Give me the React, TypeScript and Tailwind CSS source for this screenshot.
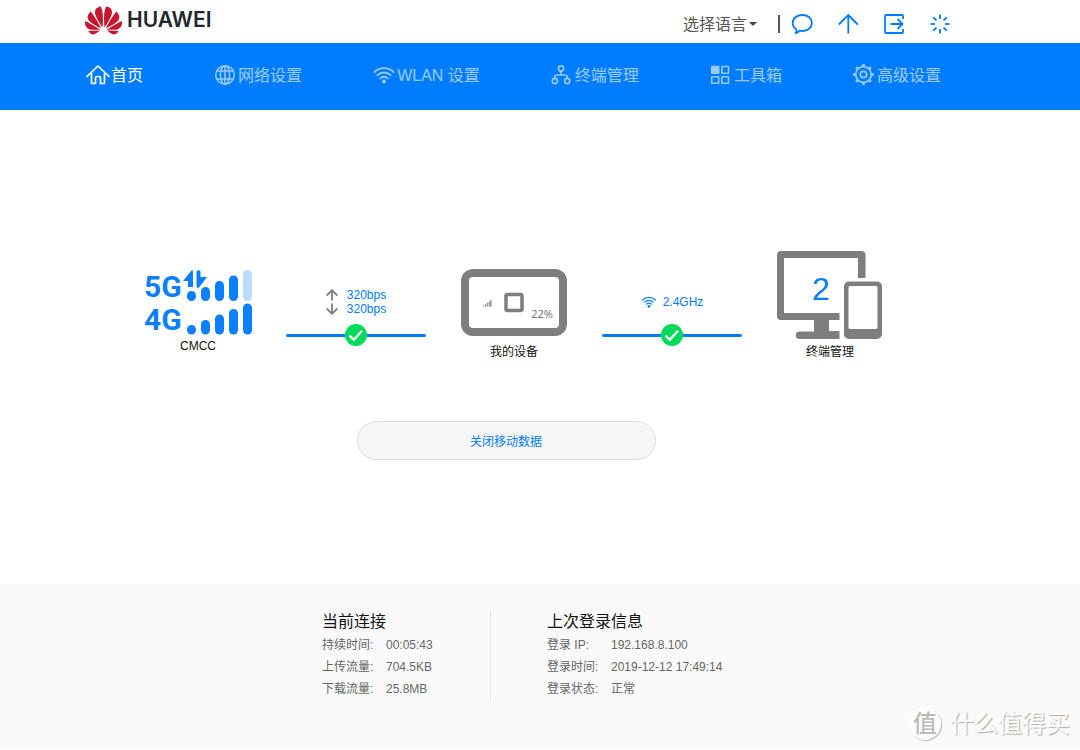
import type { ReactNode } from 'react'
import { SiHuawei } from 'react-icons/si'

function Icon({ children, width = 2, size = 24 }: { children: ReactNode; width?: number; size?: number }) {
  return (
    <svg
      width={size}
      height={size}
      viewBox="0 0 24 24"
      fill="none"
      stroke="currentColor"
      strokeWidth={width}
      aria-hidden="true"
      className="shrink-0"
    >
      {children}
    </svg>
  )
}

function HomeIcon() {
  return (
    <Icon width={1.7}>
      <path d="M1 13.500 12 3l11 10.500" strokeLinecap="round" strokeLinejoin="round" />
      <path d="M5.500 10v9.500a1 1 0 0 0 1 1h3v-5.500a1.500 1.500 0 0 1 1.500-1.500h2a1.500 1.500 0 0 1 1.500 1.500v5.500h3a1 1 0 0 0 1-1V10" />
    </Icon>
  )
}

function GlobeIcon() {
  return (
    <Icon width={1.5}>
      <circle cx="12" cy="12" r="9.300" />
      <ellipse cx="12" cy="12" rx="4.600" ry="9.300" />
      <path d="M12 3v18M4 8h16M4 16h16" />
    </Icon>
  )
}

function WifiIcon({ size = 24 }: { size?: number }) {
  return (
    <Icon width={1.8} size={size}>
      <path d="M2.500 9a13.500 13.500 0 0 1 19 0M5.500 12.200a9.200 9.200 0 0 1 13 0M8.400 15.300a5 5 0 0 1 7.200 0" strokeLinecap="round" />
      <circle cx="12" cy="18.500" r="2" fill="currentColor" stroke="none" />
    </Icon>
  )
}

function NodesIcon() {
  return (
    <Icon width={1.6}>
      <circle cx="11" cy="5.500" r="2.600" />
      <circle cx="4.800" cy="18" r="2.600" />
      <circle cx="17.200" cy="18" r="2.600" />
      <path d="M11 8v4M4.800 15.400V14a2 2 0 0 1 2-2h8.400a2 2 0 0 1 2 2v1.400" />
    </Icon>
  )
}

function ToolboxIcon() {
  return (
    <Icon width={1.6}>
      <rect x="2.700" y="3.500" width="7" height="6.800" rx="0.500" fill="currentColor" />
      <rect x="12.900" y="3.500" width="6.600" height="6.800" rx="0.500" />
      <rect x="2.700" y="13.700" width="7" height="6.500" rx="0.500" />
      <rect x="12.900" y="13.700" width="6.600" height="6.500" rx="0.500" />
    </Icon>
  )
}

const eighths = [0, 45, 90, 135, 180, 225, 270, 315]

function GearIcon() {
  return (
    <Icon width={1.7}>
      <circle cx="11.500" cy="11.500" r="7.800" />
      <circle cx="11.500" cy="11.500" r="3.200" />
      {eighths.map((angle) => (
        <path key={angle} d="M11.500 1.200v2.300" strokeWidth="3" transform={`rotate(${angle} 11.500 11.500)`} />
      ))}
    </Icon>
  )
}

const navItems = [
  { label: '首页', icon: <HomeIcon />, active: true },
  { label: '网络设置', icon: <GlobeIcon /> },
  { label: 'WLAN 设置', icon: <WifiIcon /> },
  { label: '终端管理', icon: <NodesIcon /> },
  { label: '工具箱', icon: <ToolboxIcon /> },
  { label: '高级设置', icon: <GearIcon /> },
]

const actions = [
  {
    label: '消息',
    icon: (
      <path
        d="M5.500 21c1-1 1.400-2.200 1-3.600C3.800 15.800 2.700 13.500 2.700 11c0-4.600 4.200-8 9.700-8s9.500 3.400 9.500 8-4.200 8-9.500 8c-1 0-1.800-.1-2.600-.3-1 1.200-2.300 2.200-4.300 2.300z"
        strokeLinejoin="round"
      />
    ),
  },
  { label: '更新', icon: <path d="M12.300 21.500V3M2.800 12.500 12.300 3l9.500 9.500" /> },
  {
    label: '退出',
    icon: (
      <path d="M21 7V4a1 1 0 0 0-1-1H4a1 1 0 0 0-1 1v16a1 1 0 0 0 1 1h16a1 1 0 0 0 1-1v-3M8.500 12h12M15.500 7l5 5-5 5" />
    ),
  },
  {
    label: '状态',
    icon: eighths.map((angle) => <path key={angle} d="M12 2.500v4.500" transform={`rotate(${angle} 12 12)`} />),
  },
]

function Header() {
  return (
    <header className="flex h-[43px] items-center justify-between bg-white pl-[85px] pr-[128px]">
      <a href="#" className="flex items-center gap-[5px] pb-[3px] text-[#222829]">
        <SiHuawei size={37} color="#c7172f" aria-hidden="true" />
        <span className="font-['Inter',sans-serif] text-[21px] leading-6 font-semibold">HUAWEI</span>
      </a>
      <div className="flex items-center pt-1">
        <div className="relative">
          <select
            aria-label="选择语言"
            className="w-[74px] appearance-none bg-transparent pt-[2px] text-base leading-6 text-[#555]"
          >
            <option>选择语言</option>
          </select>
          <span className="pointer-events-none absolute top-[11px] right-0 border-x-4 border-t-4 border-x-transparent border-t-[#444]" />
        </div>
        <span className="ml-[21px] h-[18px] w-[2px] bg-[#555]" />
        <div className="ml-[10px] flex gap-[22px] text-[#007dff]">
          {actions.map((action) => (
            <button key={action.label} type="button" aria-label={action.label}>
              <Icon width={1.8}>{action.icon}</Icon>
            </button>
          ))}
        </div>
      </div>
    </header>
  )
}

function Nav() {
  return (
    <nav className="flex h-[67px] justify-between bg-[#007dff] pt-5 pr-[139px] pl-[86px] text-base leading-6 text-white">
      {navItems.map((item) => (
        <a
          key={item.label}
          href="#"
          className={item.active ? 'flex h-6 items-center gap-px' : 'flex h-6 items-center gap-px opacity-60'}
        >
          {item.icon}
          <span className="pt-[2px]">{item.label}</span>
        </a>
      ))}
    </nav>
  )
}

const bars5g = [
  { x: 4, y: 21, h: 10 },
  { x: 18, y: 17, h: 14 },
  { x: 32, y: 11, h: 20 },
  { x: 46, y: 5.5, h: 25.5 },
  { x: 60, y: 0, h: 31 },
]

const bars4g = [
  { x: 4, y: 55, h: 9.5 },
  { x: 18, y: 50, h: 14.5 },
  { x: 32, y: 44.5, h: 20 },
  { x: 46, y: 39, h: 25.5 },
  { x: 60, y: 33.5, h: 31 },
]

function Signal() {
  return (
    <div className="flex flex-col items-center pb-[7px]">
      <div className="flex h-[65px] w-[108px] justify-between text-[#0a80ff]">
        <div className="font-['Roboto',sans-serif] text-[30px] leading-[33px] font-bold">
          <p>5G</p>
          <p>4G</p>
        </div>
        <svg width="69" height="65" viewBox="0 0 69 65" fill="currentColor" className="shrink-0" aria-hidden="true">
          {bars5g.map((bar, i) => (
            <rect key={bar.x} x={bar.x} y={bar.y} width="9" height={bar.h} rx="4.5" opacity={i === 4 ? 0.28 : 1} />
          ))}
          {bars4g.map((bar) => (
            <rect key={bar.x} x={bar.x} y={bar.y} width="9" height={bar.h} rx="4.5" />
          ))}
          <path d="M0 11 8 1q2-2 2 1v15H5v-6zM13.500 1.500q2-3 4 0V7H24L16 17.500q-2.500 1-2.500-1z" stroke="#fff" strokeWidth="1" paintOrder="stroke" />
        </svg>
      </div>
      <p className="mt-[2px] leading-[18px]">CMCC</p>
    </div>
  )
}

function Link({ children }: { children: ReactNode }) {
  return (
    <div className="flex flex-col items-center pb-4">
      <div className="mb-2 flex h-7 items-center text-[#007dff]">{children}</div>
      <div className="flex w-[140px] max-w-full items-center">
        <span className="h-[3px] flex-1 rounded-l-full bg-[#007dff]" />
        <svg width="22" height="22" viewBox="0 0 22 22" aria-hidden="true">
          <circle cx="11" cy="11" r="11" fill="#00d95a" />
          <path d="m4.500 11.500 4.300 4.300 8.200-9" fill="none" stroke="#fff" strokeWidth="2.400" />
        </svg>
        <span className="h-[3px] flex-1 rounded-r-full bg-[#007dff]" />
      </div>
    </div>
  )
}

function Device() {
  return (
    <div className="flex flex-col items-center">
      <div className="relative">
        <svg width="106" height="67" viewBox="0 0 106 67" fill="none" stroke="#7e7e7e" aria-hidden="true">
          <rect x="4" y="4" width="98" height="59" rx="8" strokeWidth="8" />
          <rect x="45" y="25.500" width="16" height="16" rx="1.500" strokeWidth="3.500" />
          <path d="M22.500 37.500v-1M24.500 37.500V35M26.500 37.500v-4M28.500 37.500v-5M30 37.500V31" stroke="#999" strokeWidth="1.400" />
        </svg>
        <span className="absolute right-[14px] bottom-[15px] font-['Noto_Sans',sans-serif] text-[11px] leading-[14px] text-[#777]">
          22%
        </span>
      </div>
      <p className="mt-[6px] leading-5">我的设备</p>
    </div>
  )
}

function Terminals() {
  return (
    <div className="flex flex-col items-center">
      <div className="relative">
        <svg width="106" height="88" viewBox="0 0 106 88" fill="#7e7e7e" aria-hidden="true">
          <path d="M4 0h80.500a4 4 0 0 1 4 4v23H81V7H7v55h55.500v7H52v11h10.500v8H22.500a3.500 3.500 0 0 1 0-7.500H37V69H4a4 4 0 0 1-4-4V4a4 4 0 0 1 4-4z" />
          <path
            fillRule="evenodd"
            d="M72 30.500h28a5 5 0 0 1 5 5V83a5 5 0 0 1-5 5H72a5 5 0 0 1-5-5V35.500a5 5 0 0 1 5-5zm1 4.500a1.500 1.500 0 0 0-1.500 1.500v40A1.500 1.500 0 0 0 73 78h26a1.500 1.500 0 0 0 1.500-1.500v-40A1.500 1.500 0 0 0 99 35z"
          />
        </svg>
        <span className="absolute top-5 left-[35px] text-[32px] leading-9 text-[#007dff]">2</span>
      </div>
      <p className="mt-[3px] leading-5">终端管理</p>
    </div>
  )
}

function SpeedArrow() {
  return (
    <svg width="12" height="12" viewBox="0 0 12 12" fill="none" stroke="#7e7e7e" strokeWidth="1.800" aria-hidden="true">
      <path d="M6 11.500V1.500M.7 6.500 6 1.200l5.300 5.300" />
    </svg>
  )
}

function Home() {
  return (
    <main className="pt-[141px] pr-[171px] pb-[124px] pl-[119px]">
      <div className="grid grid-cols-5 items-end">
        <Signal />
        <Link>
          <div className="leading-[14px]">
            <p className="flex items-center gap-[9px]">
              <SpeedArrow />
              320bps
            </p>
            <p className="flex items-center gap-[9px]">
              <span className="rotate-180">
                <SpeedArrow />
              </span>
              320bps
            </p>
          </div>
        </Link>
        <Device />
        <Link>
          <div className="flex items-center gap-[6px]">
            <WifiIcon size={16} />
            2.4GHz
          </div>
        </Link>
        <Terminals />
      </div>
      <div className="mt-[59px] flex justify-center pr-4">
        <button
          type="button"
          className="h-[39px] w-[299px] rounded-full border border-[#ddd] bg-[#f6f6f6] pt-[2px] leading-[18px] text-[#007dff]"
        >
          关闭移动数据
        </button>
      </div>
    </main>
  )
}

const connection = [
  ['持续时间:', '00:05:43'],
  ['上传流量:', '704.5KB'],
  ['下载流量:', '25.8MB'],
]

const lastLogin = [
  ['登录 IP:', '192.168.8.100'],
  ['登录时间:', '2019-12-12 17:49:14'],
  ['登录状态:', '正常'],
]

function InfoBlock({ title, rows }: { title: string; rows: string[][] }) {
  return (
    <section>
      <h2 className="text-base leading-6 text-[#111]">{title}</h2>
      <dl className="leading-[22px] text-[#666]">
        {rows.map(([name, value]) => (
          <div key={name} className="flex">
            <dt className="w-16">{name}</dt>
            <dd>{value}</dd>
          </div>
        ))}
      </dl>
    </section>
  )
}

function Footer() {
  return (
    <footer className="relative bg-[#fafafa] px-[322px] pt-[26px] pb-[49px]">
      <div className="flex whitespace-nowrap">
        <div className="w-[168px] shrink-0">
          <InfoBlock title="当前连接" rows={connection} />
        </div>
        <span className="mt-px mb-[-2px] w-px shrink-0 bg-[#e8e8e8]" />
        <div className="pl-14">
          <InfoBlock title="上次登录信息" rows={lastLogin} />
        </div>
      </div>
      <div className="absolute right-[10px] bottom-[9px] flex items-center gap-[9px] text-2xl leading-8 text-white [text-shadow:1px_1px_1px_#aaa]">
        <span className="flex size-8 items-center justify-center rounded-full bg-white font-medium text-[#bbb] shadow-[1px_1px_1px_#bbb] [text-shadow:none]">
          值
        </span>
        <span>什么值得买</span>
      </div>
    </footer>
  )
}

export default function App() {
  return (
    <div className="bg-white font-['Liberation_Sans','Noto_Sans_CJK_SC',sans-serif] text-xs text-[#111]">
      <Header />
      <Nav />
      <Home />
      <Footer />
    </div>
  )
}
